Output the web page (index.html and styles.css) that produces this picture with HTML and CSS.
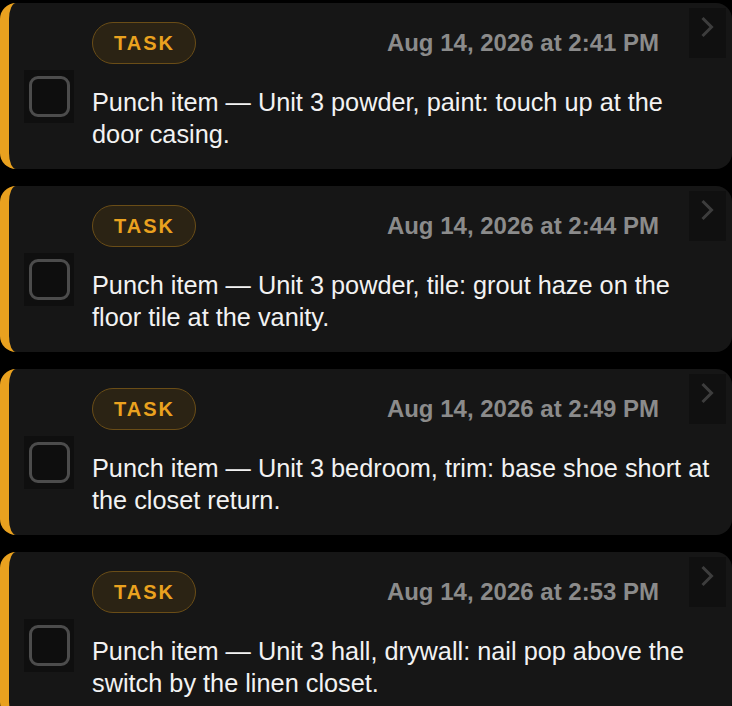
FILE: index.html
```html
<!DOCTYPE html>
<html lang="en">
<head>
<meta charset="utf-8">
<title>Punch list</title>
<link rel="stylesheet" href="styles.css">
</head>
<body>
<div class="list">
  <div class="card">
    <div class="spacer"></div>
    <div class="header">
      <span class="badge">TASK</span>
      <span class="date">Aug 14, 2026 at 2:41 PM</span>
    </div>
    <div class="check"><span class="box"></span></div>
    <p class="text">Punch item — Unit 3 powder, paint: touch up at the door casing.</p>
    <button class="more"><svg width="37" height="50" viewBox="0 0 37 50"><path d="M13.5 10 L22.5 19 L13.5 28" fill="none" stroke="#3d3d3d" stroke-width="3"/></svg></button>
  </div>
  <div class="card">
    <div class="spacer"></div>
    <div class="header">
      <span class="badge">TASK</span>
      <span class="date">Aug 14, 2026 at 2:44 PM</span>
    </div>
    <div class="check"><span class="box"></span></div>
    <p class="text">Punch item — Unit 3 powder, tile: grout haze on the floor tile at the vanity.</p>
    <button class="more"><svg width="37" height="50" viewBox="0 0 37 50"><path d="M13.5 10 L22.5 19 L13.5 28" fill="none" stroke="#3d3d3d" stroke-width="3"/></svg></button>
  </div>
  <div class="card">
    <div class="spacer"></div>
    <div class="header">
      <span class="badge">TASK</span>
      <span class="date">Aug 14, 2026 at 2:49 PM</span>
    </div>
    <div class="check"><span class="box"></span></div>
    <p class="text">Punch item — Unit 3 bedroom, trim: base shoe short at the closet return.</p>
    <button class="more"><svg width="37" height="50" viewBox="0 0 37 50"><path d="M13.5 10 L22.5 19 L13.5 28" fill="none" stroke="#3d3d3d" stroke-width="3"/></svg></button>
  </div>
  <div class="card">
    <div class="spacer"></div>
    <div class="header">
      <span class="badge">TASK</span>
      <span class="date">Aug 14, 2026 at 2:53 PM</span>
    </div>
    <div class="check"><span class="box"></span></div>
    <p class="text">Punch item — Unit 3 hall, drywall: nail pop above the switch by the linen closet.</p>
    <button class="more"><svg width="37" height="50" viewBox="0 0 37 50"><path d="M13.5 10 L22.5 19 L13.5 28" fill="none" stroke="#3d3d3d" stroke-width="3"/></svg></button>
  </div>
</div>
</body>
</html>
```

FILE: styles.css
```css
html, body {
  margin: 0;
  padding: 0;
  background: #000;
}
body {
  font-family: "Liberation Sans", Arial, sans-serif;
  color: #f2f2f2;
  overflow: hidden;
}
.list {
  display: flex;
  flex-direction: column;
  gap: 17px;
  padding-top: 3px;
}
.card {
  position: relative;
  background: #161616;
  border-left: 9px solid #e9a11f;
  border-radius: 16px;
  padding: 19px 19px 19px 15px;
  display: grid;
  grid-template-columns: 50px 1fr;
  column-gap: 18px;
  row-gap: 6px;
}
.header {
  display: flex;
  justify-content: space-between;
  align-items: center;
  padding-right: 54px;
}
.badge {
  box-sizing: border-box;
  width: 104px;
  height: 42px;
  border: 1.5px solid #6a4d17;
  background: #2b2314;
  border-radius: 21px;
  color: #eaa21f;
  font-weight: 700;
  font-size: 20px;
  letter-spacing: 2px;
  display: flex;
  align-items: center;
  justify-content: center;
  padding-left: 1px;
}
.date {
  color: #8b8b8b;
  font-weight: 700;
  font-size: 24px;
}
.check {
  width: 50px;
  height: 53px;
  background: #0f0f0f;
  display: flex;
  align-items: center;
  justify-content: center;
}
.box {
  box-sizing: border-box;
  width: 41px;
  height: 41px;
  border: 3.5px solid #4c4c4c;
  border-radius: 9px;
  background: #0e0e0e;
}
.text {
  margin: 0;
  padding-top: 16px;
  font-size: 25.3px;
  line-height: 32px;
}
.more {
  position: absolute;
  top: 5px;
  right: 6px;
  width: 37px;
  height: 50px;
  padding: 0;
  border: 0;
  background: #101010;
  display: block;
}
.more svg {
  display: block;
}
```
